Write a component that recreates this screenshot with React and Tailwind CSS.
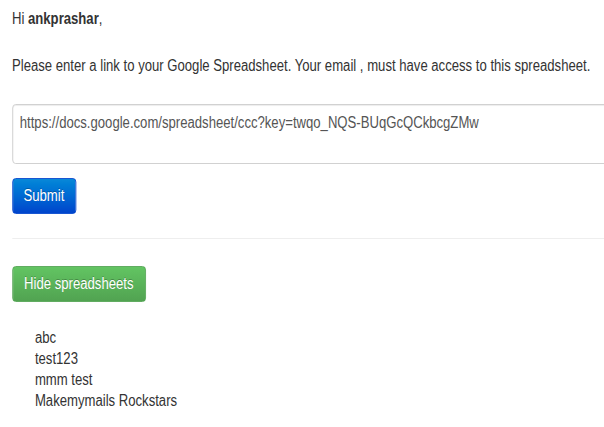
export default function App() {
  const sheets = ["abc", "test123", "mmm test", "Makemymails Rockstars"];
  return (
    <div className="h-[427px] w-[604px] overflow-hidden bg-white">
      <div
        className="w-[737px] origin-top-left scale-x-[0.82] pl-[14.6px] pt-[9px] text-[16px] leading-[20px] text-[#333]"
        style={{ fontFamily: '"Liberation Sans", Arial, sans-serif' }}
      >
        <p>
          Hi <b>ankprashar</b>,
        </p>
        <p className="mt-[27px] whitespace-nowrap">
          Please enter a link to your Google Spreadsheet. Your email , must have access to this spreadsheet.
        </p>
        <textarea
          readOnly
          className="mt-[28px] block h-[60px] w-[760px] resize-none rounded-[4px] border border-[#ccc] px-[8.5px] pt-[8px] text-[16px] leading-[20px] text-[#555] shadow-[inset_0_1px_1px_rgba(0,0,0,0.075)] outline-none"
          defaultValue="https://docs.google.com/spreadsheet/ccc?key=twqo_NQS-BUqGcQCkbcgZMw"
        />
        <button className="mt-[14px] block h-[36px] w-[78px] rounded-[4px] border border-[#0044cc] bg-gradient-to-b from-[#0a88d8] to-[#0044cc] text-[16px] text-white [text-shadow:0_-1px_0_rgba(0,0,0,0.25)]">
          Submit
        </button>
        <hr className="mt-[24px] border-0 border-t border-[#eee]" />
        <button className="mt-[27px] block h-[36px] w-[163px] whitespace-nowrap rounded-[4px] border border-[#51a351] bg-gradient-to-b from-[#62c462] to-[#51a351] text-[16px] text-white [text-shadow:0_-1px_0_rgba(0,0,0,0.25)]">
          Hide spreadsheets
        </button>
        <ul className="mt-[25px] pl-[28px] leading-[21px]">
          {sheets.map((s) => (
            <li key={s}>{s}</li>
          ))}
        </ul>
      </div>
    </div>
  );
}
